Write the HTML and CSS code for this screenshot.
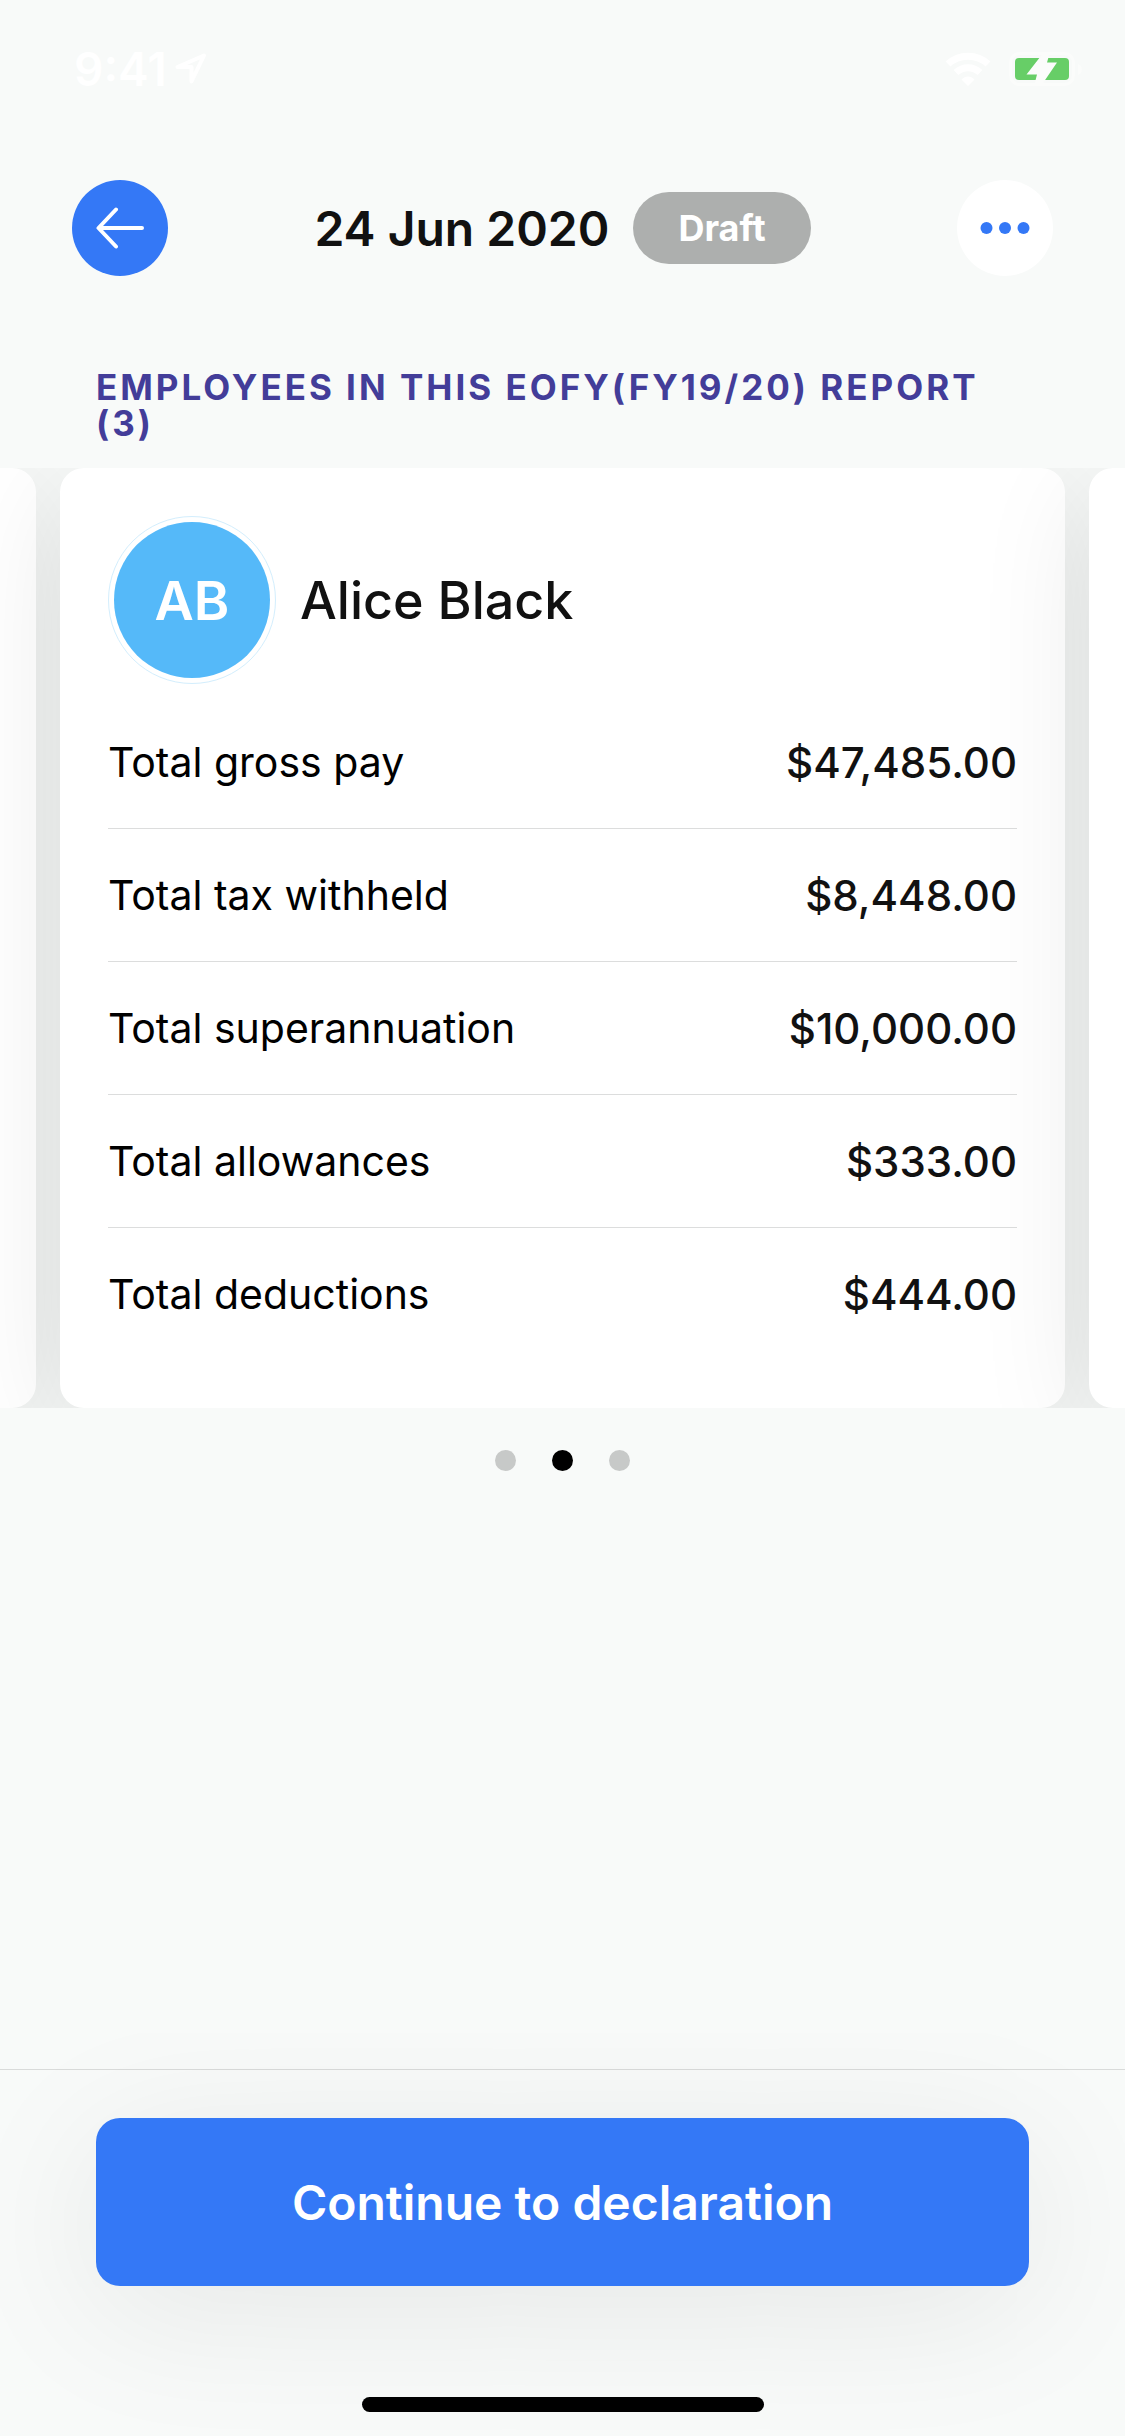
FILE: index.html
```html
<!DOCTYPE html>
<html lang="en">
<head>
<meta charset="utf-8">
<meta name="viewport" content="width=device-width, initial-scale=1">
<title>EOFY report</title>
<link rel="stylesheet" href="styles.css">
</head>
<body>
<div class="status-bar">
  <div class="status-group">
    <span class="clock">9:41</span>
    <svg class="location-icon" width="36" height="36" viewBox="0 0 36 36" aria-hidden="true">
      <path d="M31 4.500 4.500 16H18.500V30.500z" fill="none" stroke="#fff" stroke-width="4" stroke-linejoin="round"/>
    </svg>
  </div>
  <div class="status-group status-right">
    <svg width="46" height="34" viewBox="0 0 46 34" aria-hidden="true">
      <g fill="none" stroke="#fff" stroke-width="7">
        <path d="M3 12C14 1.500 32 1.500 43 12"/>
        <path d="M11 20.500C18 14 28 14 35 20.500"/>
      </g>
      <path d="M16.500 27.500c4-4 9-4 13 0L23 34z" fill="#fff"/>
    </svg>
    <svg width="74" height="38" viewBox="0 0 74 38" aria-hidden="true">
      <rect x="1.500" y="3.500" width="63" height="31" rx="9" fill="none" stroke="#fbfcfb" stroke-width="3"/>
      <path d="M69 14c5 2 5 9 0 11z" fill="#fbfcfb"/>
      <rect x="6" y="8" width="54" height="22" rx="4" fill="#67ce67"/>
      <path d="M35 2 17.500 24.500H28L25 36h7L48 12.500H38L41 2z" fill="#fbfcfb"/>
    </svg>
  </div>
</div>

<header class="top-bar">
  <button class="round-button back" type="button" aria-label="Back">
    <svg width="48" height="42" viewBox="0 0 48 42" aria-hidden="true">
      <path d="M46 21H3M20 2.500 2.500 21 20 39.500" fill="none" stroke="#fff" stroke-width="4" stroke-linecap="round" stroke-linejoin="round"/>
    </svg>
  </button>
  <div class="top-title">
    <h1 class="date">24 Jun 2020</h1>
    <span class="badge">Draft</span>
  </div>
  <button class="round-button more" type="button" aria-label="More options">
    <svg width="50" height="12" viewBox="0 0 50 12" fill="#3478f6" aria-hidden="true">
      <circle cx="6.500" cy="6" r="6"/><circle cx="25" cy="6" r="6"/><circle cx="43.500" cy="6" r="6"/>
    </svg>
  </button>
</header>

<main>
  <h2 class="section-title">EMPLOYEES IN THIS EOFY(FY19/20) REPORT (3)</h2>
  <div class="carousel">
    <div class="card" aria-hidden="true"></div>
    <article class="card">
      <div class="person">
        <span class="avatar">AB</span>
        <h3 class="name">Alice Black</h3>
      </div>
      <table class="totals">
        <tbody>
          <tr><th scope="row">Total gross pay</th><td>$47,485.00</td></tr>
          <tr><th scope="row">Total tax withheld</th><td>$8,448.00</td></tr>
          <tr><th scope="row">Total superannuation</th><td>$10,000.00</td></tr>
          <tr><th scope="row">Total allowances</th><td>$333.00</td></tr>
          <tr><th scope="row">Total deductions</th><td>$444.00</td></tr>
        </tbody>
      </table>
    </article>
    <div class="card" aria-hidden="true"></div>
  </div>
  <div class="pager">
    <button class="dot" type="button" aria-label="Employee 1"></button>
    <button class="dot current" type="button" aria-label="Employee 2" aria-current="true"></button>
    <button class="dot" type="button" aria-label="Employee 3"></button>
  </div>
</main>

<footer class="footer">
  <button class="primary" type="button">Continue to declaration</button>
  <div class="home-indicator"></div>
</footer>
</body>
</html>
```
FILE: styles.css
```css
:root {
  --blue: #3478f6;
  --ink: #111;
  --page: #f8faf9;
}

* {
  box-sizing: border-box;
}

body {
  margin: 0;
  min-height: 100vh;
  display: flex;
  flex-direction: column;
  overflow-x: hidden;
  background: var(--page);
  color: var(--ink);
  font-family: Inter, "Liberation Sans", sans-serif;
}

h1,
h2,
h3 {
  margin: 0;
}

button {
  border: 0;
  padding: 0;
  font-family: inherit;
  cursor: pointer;
}

svg {
  display: block;
}

.status-bar {
  height: 132px;
  padding: 6px 42px 0 74px;
  display: flex;
  justify-content: space-between;
  align-items: center;
}

.status-group {
  display: flex;
  align-items: center;
  gap: 6px;
}

.status-right {
  gap: 18px;
}

.clock {
  color: #fff;
  font-size: 46px;
  font-weight: 600;
}

.top-bar {
  padding: 48px 72px 0;
  display: flex;
  justify-content: space-between;
  align-items: center;
}

.round-button {
  width: 96px;
  height: 96px;
  border-radius: 50%;
  display: flex;
  align-items: center;
  justify-content: center;
}

.back {
  background: var(--blue);
}

.more {
  background: #fff;
}

.top-title {
  display: flex;
  align-items: center;
  gap: 24px;
}

.date {
  font-size: 48px;
  font-weight: 600;
}

.badge {
  height: 72px;
  padding: 0 45px;
  border-radius: 36px;
  display: flex;
  align-items: center;
  background: #adafae;
  color: #fff;
  font-size: 36px;
  font-weight: 700;
}

.section-title {
  padding: 93px 96px 27px;
  color: #433d99;
  font-size: 35px;
  line-height: 36px;
  font-weight: 700;
  letter-spacing: 3px;
}

.carousel {
  display: flex;
  justify-content: center;
  gap: 24px;
  overflow: hidden;
}

.card {
  flex: 0 0 calc(100% - 120px);
  padding: 48px;
  border-radius: 24px;
  background: #fff;
  box-shadow: 0 24px 120px rgba(0, 0, 0, 0.09);
}

.person {
  display: flex;
  align-items: center;
  gap: 24px;
  padding-bottom: 12px;
}

.avatar {
  width: 168px;
  height: 168px;
  border: 1px solid #d3eefd;
  border-radius: 50%;
  padding: 5px;
  display: flex;
  align-items: center;
  justify-content: center;
  background: #55b9f9 content-box;
  color: #fff;
  font-size: 54px;
  font-weight: 600;
}

.name {
  font-size: 52px;
  font-weight: 500;
}

.totals {
  width: 100%;
  border-collapse: separate;
  border-spacing: 0;
}

.totals th,
.totals td {
  height: 133px;
  padding: 0;
  border-bottom: 1px solid #dcdddd;
}

.totals th {
  color: #000;
  font-size: 41px;
  font-weight: 400;
  text-align: left;
}

.totals td {
  font-size: 42px;
  font-weight: 500;
  text-align: right;
}

.totals tr:last-child th,
.totals tr:last-child td {
  height: 132px;
  border-bottom: 0;
}

.pager {
  padding: 42px 0;
  display: flex;
  justify-content: center;
  gap: 36px;
}

.dot {
  width: 21px;
  height: 21px;
  border-radius: 50%;
  background: #c7c9c8;
}

.current {
  background: #000;
}

.footer {
  margin-top: auto;
  padding: 48px 96px 24px;
  border-top: 1px solid #d9dbda;
  display: flex;
  flex-direction: column;
  align-items: center;
  gap: 111px;
}

.primary {
  width: 100%;
  height: 168px;
  border-radius: 24px;
  background: var(--blue);
  box-shadow: 0 24px 150px rgba(0, 0, 0, 0.08);
  color: #fff;
  font-size: 48px;
  font-weight: 600;
}

.home-indicator {
  width: 402px;
  height: 15px;
  border-radius: 8px;
  background: #000;
}
```
